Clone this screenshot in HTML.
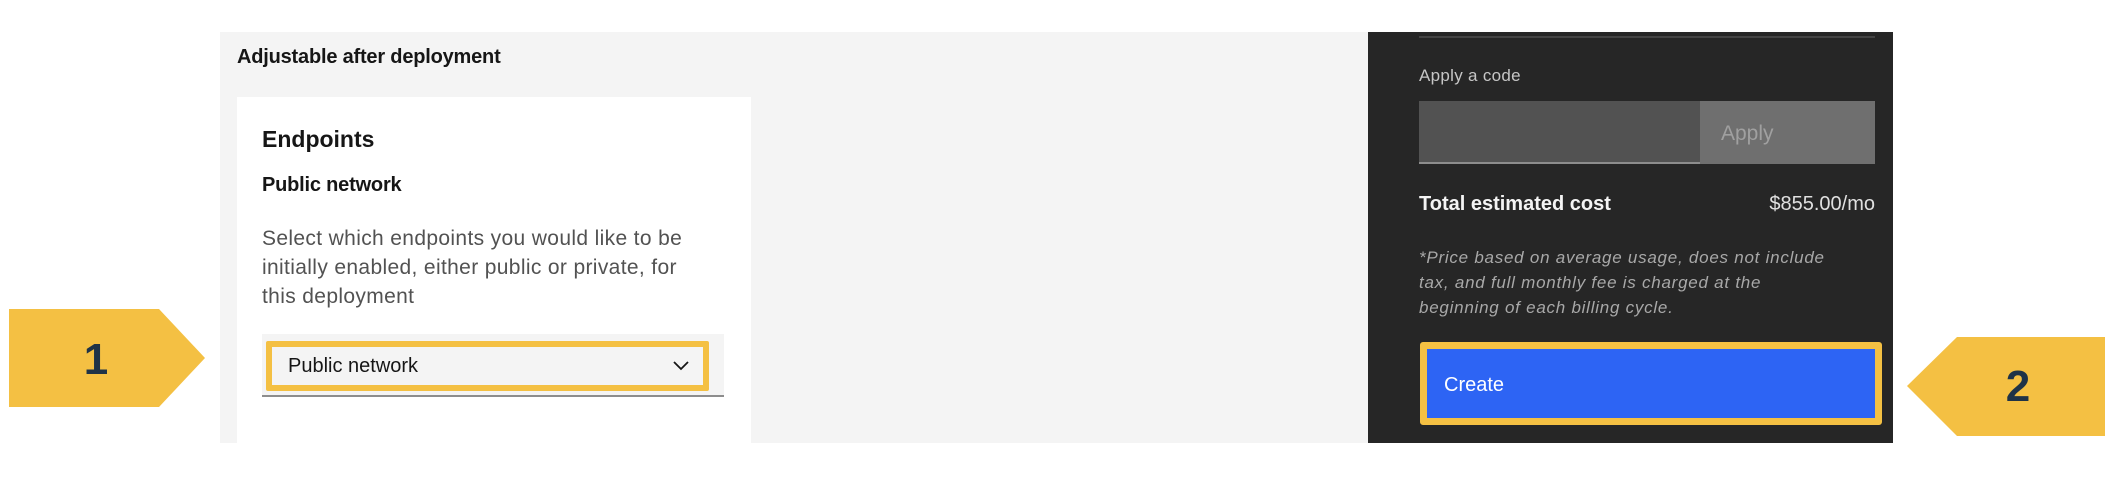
<!DOCTYPE html>
<html><head><style>
*{margin:0;padding:0;box-sizing:border-box}
body{width:2126px;height:492px;background:#fff;position:relative;overflow:hidden;font-family:"Liberation Sans",Arial,sans-serif}
.a{position:absolute;white-space:nowrap}
</style></head><body>
<div class="a" style="left:220px;top:32px;width:1148px;height:411px;background:#f4f4f4"></div>
<div class="a" style="left:237px;top:46px;font-size:20px;font-weight:bold;color:#161616;letter-spacing:-0.2px">Adjustable after deployment</div>
<div class="a" style="left:237px;top:97px;width:514px;height:346px;background:#fff"></div>
<div class="a" style="left:262px;top:126px;font-size:23px;font-weight:bold;color:#161616">Endpoints</div>
<div class="a" style="left:262px;top:174px;font-size:20px;font-weight:bold;color:#161616;letter-spacing:-0.2px">Public network</div>
<div class="a" style="left:262px;top:224px;font-size:21px;line-height:29px;color:#525252;letter-spacing:0.35px">Select which endpoints you would like to be<br>initially enabled, either public or private, for<br>this deployment</div>
<div class="a" style="left:262px;top:334px;width:462px;height:63px;background:#f4f4f4;border-bottom:2px solid #8d8d8d"></div>
<div class="a" style="left:266px;top:341px;width:443px;height:50px;border:6px solid #f4c043;border-radius:2px"></div>
<div class="a" style="left:288px;top:355px;font-size:20px;color:#161616">Public network</div>
<svg class="a" style="left:672px;top:360px" width="18" height="12" viewBox="0 0 18 12"><path d="M2 2 L9 9 L16 2" fill="none" stroke="#161616" stroke-width="1.8"/></svg>
<svg class="a" style="left:9px;top:309px" width="197" height="99"><polygon points="0,0 150,0 196,49 150,98 0,98" fill="#f4c043"/><text x="87" y="65" text-anchor="middle" font-family="Liberation Sans" font-weight="bold" font-size="44" fill="#1f3347">1</text></svg>

<div class="a" style="left:1368px;top:32px;width:525px;height:411px;background:#262626"></div>
<div class="a" style="left:1419px;top:36px;width:456px;height:2px;background:#444"></div>
<div class="a" style="left:1419px;top:66px;font-size:17px;color:#c6c6c6;letter-spacing:0.3px">Apply a code</div>
<div class="a" style="left:1419px;top:101px;width:281px;height:63px;background:#525252;border-bottom:2px solid #8d8d8d"></div>
<div class="a" style="left:1700px;top:101px;width:175px;height:63px;background:#6f6f6f"></div>
<div class="a" style="left:1721px;top:122px;font-size:21px;color:#a0a0a0">Apply</div>
<div class="a" style="left:1419px;top:193px;font-size:20px;font-weight:bold;color:#f4f4f4">Total estimated cost</div>
<div class="a" style="left:1700px;top:193px;width:175px;text-align:right;font-size:20px;color:#e0e0e0">$855.00/mo</div>
<div class="a" style="left:1419px;top:245px;font-size:17px;line-height:25px;font-style:italic;color:#a8a8a8;letter-spacing:0.75px">*Price based on average usage, does not include<br>tax, and full monthly fee is charged at the<br>beginning of each billing cycle.</div>
<div class="a" style="left:1420px;top:342px;width:462px;height:83px;border:7px solid #f4c043;border-radius:3px;background:#2d64f4"></div>
<div class="a" style="left:1444px;top:374px;font-size:20px;color:#fff">Create</div>
<svg class="a" style="left:1907px;top:337px" width="198" height="100"><polygon points="0,49 50,0 198,0 198,99 50,99" fill="#f4c043"/><text x="111" y="64" text-anchor="middle" font-family="Liberation Sans" font-weight="bold" font-size="44" fill="#1f3347">2</text></svg>
</body></html>
